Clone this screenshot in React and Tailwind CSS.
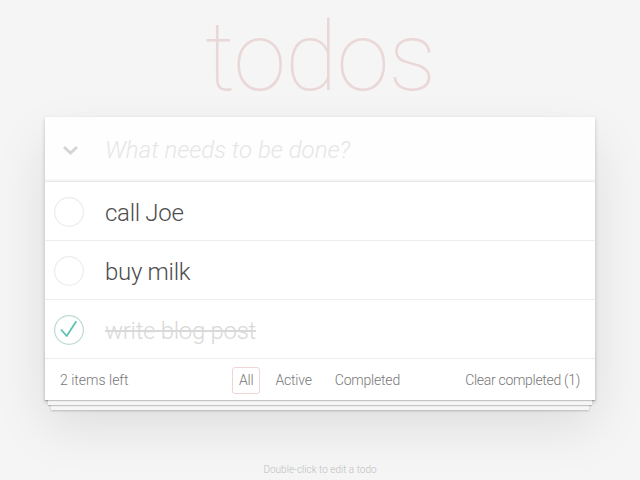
import React from 'react'

const todos = [
  { id: 1, title: 'call Joe', completed: false },
  { id: 2, title: 'buy milk', completed: false },
  { id: 3, title: 'write blog post', completed: true },
]

const Toggle = ({ checked }) => (
  <svg width="30" height="30" viewBox="0 0 30 30" className="shrink-0">
    <circle cx="15" cy="15" r="14.4" fill="none" stroke={checked ? '#bddad5' : '#ececec'} strokeWidth="1.2" />
    {checked && (
      <polyline points="7,14.5 12.7,21 22.3,6.3" fill="none" stroke="#5dc2af" strokeWidth="1.8" strokeLinejoin="round" />
    )}
  </svg>
)

const App = () => {
  const left = todos.filter((t) => !t.completed).length

  return (
    <div className="min-h-screen bg-[#f5f5f5] font-['Roboto','Liberation_Sans',sans-serif] font-light text-[#4d4d4d] text-[14px]">
      <div className="w-[550px] mx-auto pt-[7px]">
        <h1 className="text-center text-[96px] leading-[100px] font-thin text-[rgba(175,47,47,0.15)] tracking-[-1px] h-[110px]">
          todos
        </h1>

        <section className="bg-white relative shadow-[0_2px_4px_0_rgba(0,0,0,0.2),0_25px_50px_0_rgba(0,0,0,0.1)]">
          {/* header / new todo */}
          <div className="flex items-center h-[65px] bg-[rgba(0,0,0,0.003)] shadow-[inset_0_-2px_1px_rgba(0,0,0,0.03)] border-b border-[#e6e6e6]">
            <div className="w-[60px] pl-[17px] pt-[2px]">
              <svg width="17" height="10" viewBox="0 0 17 10">
                <polyline points="2,2 8.5,8 15,2" fill="none" stroke="#d4d4d4" strokeWidth="2.8" />
              </svg>
            </div>
            <span className="text-[24px] italic font-light text-[#e6e6e6] pt-[2px]">What needs to be done?</span>
          </div>

          {/* list */}
          <ul>
            {todos.map((t) => (
              <li key={t.id} className="flex items-center h-[59px] border-b border-[#ededed]">
                <div className="w-[60px] pl-[9px] pt-[2px]">
                  <Toggle checked={t.completed} />
                </div>
                <span
                  className={
                    t.completed
                      ? 'text-[24px] text-[#d9d9d9] line-through tracking-[-0.3px] pt-[3px]'
                      : 'text-[24px] text-[#4d4d4d] tracking-[-0.3px] pt-[3px]'
                  }
                >
                  {t.title}
                </span>
              </li>
            ))}
          </ul>

          {/* footer */}
          <footer className="relative grid grid-cols-[1fr_auto_1fr] items-center h-[41px] px-[15px] pt-[2px] text-[#777] text-[14px]">
            <div className="absolute inset-x-0 bottom-0 h-[50px] overflow-hidden pointer-events-none shadow-[0_1px_1px_rgba(0,0,0,0.2),0_8px_0_-3px_#f6f6f6,0_9px_1px_-3px_rgba(0,0,0,0.2),0_16px_0_-6px_#f6f6f6,0_17px_2px_-6px_rgba(0,0,0,0.2)]" />
            <span className="relative">{left} items left</span>
            <ul className="relative flex items-center gap-[7px] tracking-[-0.2px]">
              <li className="px-[6px] py-[2px] border border-[rgba(175,47,47,0.2)] rounded-[3px]">All</li>
              <li className="px-[7px] py-[3px] border border-transparent">Active</li>
              <li className="px-[7px] py-[3px] border border-transparent">Completed</li>
            </ul>
            <span className="relative text-right tracking-[-0.3px]">Clear completed (1)</span>
          </footer>
        </section>

        <p className="mt-[62px] text-center text-[10px] text-[#bfbfbf]">Double-click to edit a todo</p>
      </div>
    </div>
  )
}

export default App
